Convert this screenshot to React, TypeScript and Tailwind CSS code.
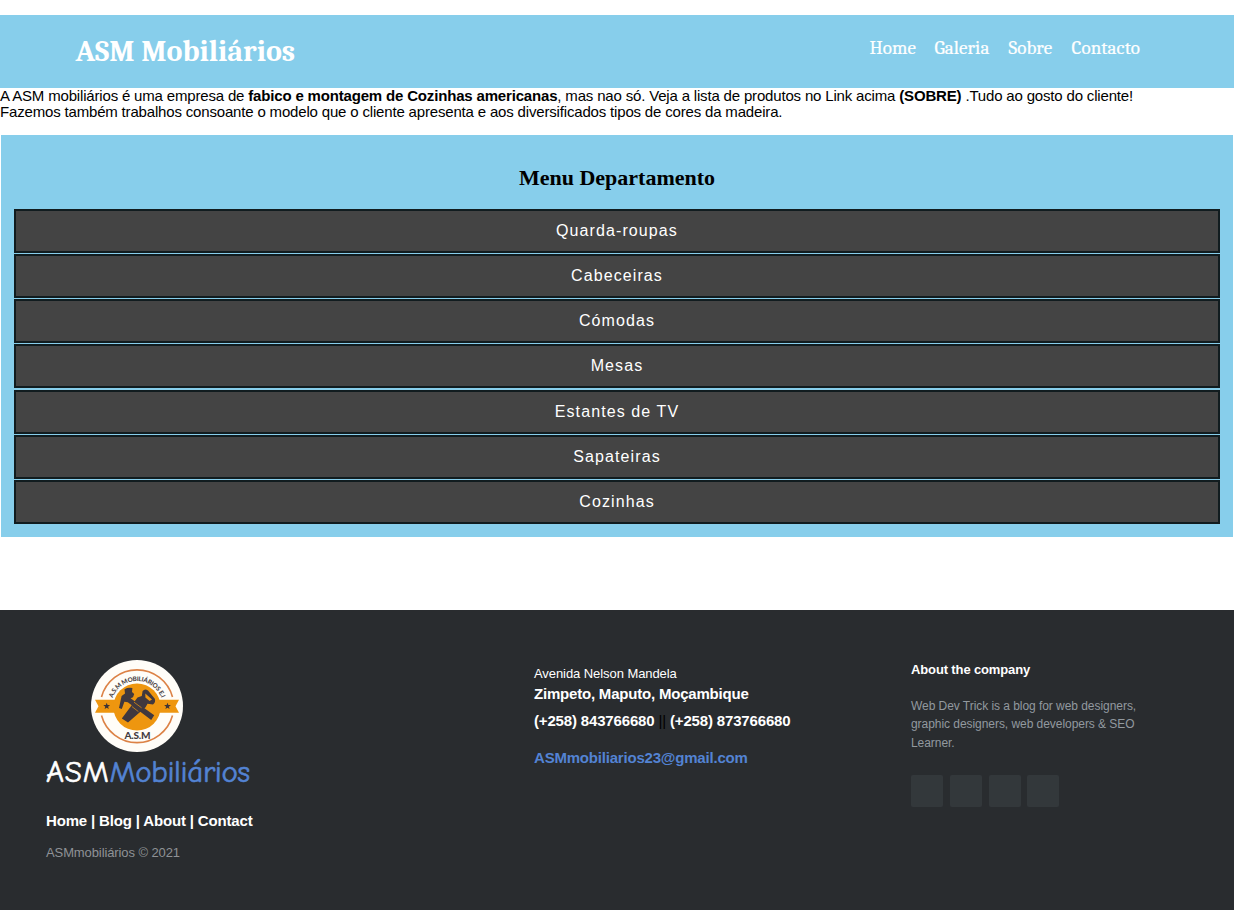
const departments = [
  "Quarda-roupas",
  "Cabeceiras",
  "Cómodas",
  "Mesas",
  "Estantes de TV",
  "Sapateiras",
  "Cozinhas",
];

const serif = "font-['Cambria','Caladea','DejaVu_Serif_Condensed','DejaVu_Serif',serif]";

function Star({ x }: { x: number }) {
  return (
    <path
      transform={`translate(${x} 46.2)`}
      d="M0-3.5 .9-1.1 3.4-1.1 1.4.5 2.1 2.9 0 1.5-2.1 2.9-1.4.5-3.4-1.1-.9-1.1Z"
      fill="#3d3436"
    />
  );
}

function Logo() {
  return (
    <svg className="ml-[45px] block h-[92px] w-[92px]" viewBox="0 0 92 92">
      <defs>
        <path id="seal-arc" d="M20 47A26 26 0 0 1 72 47" />
      </defs>
      <circle cx="46" cy="46" r="46" fill="#fffdf8" />
      <path d="M10.5 37A36.8 36.8 0 0 1 81.5 37M10.5 55.5A36.8 36.8 0 0 0 81.5 55.5" fill="none" stroke="#dc8246" strokeWidth="1.6" />
      <path d="M4 39.7H88L84.5 46.2 88 52.7H4L7.5 46.2Z" fill="#ee960f" />
      <circle cx="46" cy="47" r="23.6" fill="#ee960f" />
      <Star x={15.7} />
      <Star x={76.5} />
      <text fill="#4b4345" fontSize="6.3" textLength="63" className="font-['Lato',sans-serif] font-black">
        <textPath href="#seal-arc" startOffset="9">A.S.M MOBILIÁRIOS E.I</textPath>
      </text>
      <g fill="#40383e">
        <path d="M33.5 29.2Q37 27.2 41.4 28L41 32 43.2 34 42 37.2 39.6 38.2 63.2 55.2 60.2 60 36.8 42.2 33.4 41.8 30.8 49 28 48 30.6 36 34 33.4Z" />
        <path
          fillRule="evenodd"
          d="M46.5 37.4 50.8 36 51.6 31Q54 28.2 57 30.6L63.8 38.8Q65 42.6 62 44.4L56.5 43.8 54.6 47.2 37 62.4 30.8 58.4ZM54.3 33.4 54.4 37.6 58.6 41 61 39.6Z"
        />
      </g>
      <path d="M43 42.2 50.6 47.8M41 46.6 47.4 51.6" stroke="#ee960f" strokeWidth=".7" />
      <text x="46.5" y="79" textAnchor="middle" textLength="26" fontSize="10" fill="#443c40" className="font-['Lato',sans-serif] font-black">
        A.S.M
      </text>
    </svg>
  );
}

export default function App() {
  return (
    <div className="h-[910px] w-[1234px] overflow-hidden bg-white pt-[14.5px] font-['Liberation_Sans',Arial,sans-serif] text-black">
      <header className={`${serif} flex h-[73px] justify-between bg-[#87ceeb] pr-[93.5px] pl-[75.5px] text-white`}>
        <h1 className="pt-[17px] text-[30px] leading-[40px] font-bold whitespace-nowrap">ASM Mobiliários</h1>
        <nav className="flex pt-[21.5px] text-[19px] leading-[24px] tracking-[0.08px] whitespace-nowrap [-webkit-text-stroke:0.2px_currentColor]">
          <a className="w-[65px]">Home</a>
          <a className="w-[74px]">Galeria</a>
          <a className="w-[63px]">Sobre</a>
          <a className="w-[69px]">Contacto</a>
        </nav>
      </header>

      <div className="h-[47.5px] text-[15px] leading-[16.5px] tracking-[-0.172px] whitespace-nowrap">
        <p>
          A ASM mobiliários é uma empresa de <b>fabico e montagem de Cozinhas americanas</b>, mas nao só. Veja a lista de
          produtos no Link acima <b>(SOBRE)</b> .Tudo ao gosto do cliente!
        </p>
        <p>Fazemos também trabalhos consoante o modelo que o cliente apresenta e aos diversificados tipos de cores da madeira.</p>
      </div>

      <section className="mx-px h-[402px] bg-[#87ceeb] px-[13px] pt-[28px]">
        <h2 className="h-[46px] text-center font-['Liberation_Serif','Times_New_Roman',serif] text-[22px] leading-[29px] font-bold">
          Menu Departamento
        </h2>
        <ul className="flex flex-col gap-[1.17px]">
          {departments.map((name) => (
            <li
              key={name}
              className="h-[44px] border-2 border-[#111c1f] bg-[#444] text-center text-[16px] leading-[39px] tracking-[1.1px] text-white"
            >
              {name}
            </li>
          ))}
        </ul>
      </section>

      <footer className="mt-[73px] flex h-[300px] bg-[#292c2f] pt-[50px] pl-[46px] text-white">
        <div className="w-[488px]">
          <Logo />
          <div className="mt-[2px] h-[36px] font-['Comic_Sans_MS','Comic_Neue','Lato',cursive] text-[31px] leading-[36px] tracking-[0.8px] whitespace-nowrap [-webkit-text-stroke:0.6px_currentColor]">
            ASM<span className="tracking-[-0.35px] text-[#5383d3]">Mobiliários</span>
          </div>
          <p className="mt-[21px] text-[15px] leading-[20px] font-bold tracking-[-0.16px] whitespace-nowrap">Home | Blog | About | Contact</p>
          <p className="mt-[12px] text-[13px] leading-[20px] tracking-[-0.1px] text-[#8f9296]">ASMmobiliários © 2021</p>
        </div>
        <div className="w-[377px] pt-[4px] whitespace-nowrap">
          <p className="text-[13px] leading-[20px] tracking-[-0.07px]">Avenida Nelson Mandela</p>
          <p className="text-[15px] leading-[20px] font-bold tracking-[-0.2px]">Zimpeto, Maputo, Moçambique</p>
          <p className="mt-[7px] text-[15px] leading-[20px] font-bold tracking-[-0.16px]">
            (+258) 843766680 <span className="font-normal text-black">||</span> (+258) 873766680
          </p>
          <p className="mt-[17px] text-[15px] leading-[20px] font-bold tracking-[-0.2px] text-[#5383d3]">ASMmobiliarios23@gmail.com</p>
        </div>
        <div className="whitespace-nowrap">
          <h3 className="text-[13px] leading-[20px] font-bold tracking-[-0.13px]">About the company</h3>
          <p className="mt-[17px] text-[12px] leading-[18.3px] tracking-[-0.05px] text-[#92999f]">
            Web Dev Trick is a blog for web designers,
            <br />
            graphic designers, web developers &amp; SEO
            <br />
            Learner.
          </p>
          <div className="mt-[23px] flex gap-[6.8px]">
            <span className="h-8 w-8 rounded-xs bg-[#33383b]" />
            <span className="h-8 w-8 rounded-xs bg-[#33383b]" />
            <span className="h-8 w-8 rounded-xs bg-[#33383b]" />
            <span className="h-8 w-8 rounded-xs bg-[#33383b]" />
          </div>
        </div>
      </footer>
    </div>
  );
}
